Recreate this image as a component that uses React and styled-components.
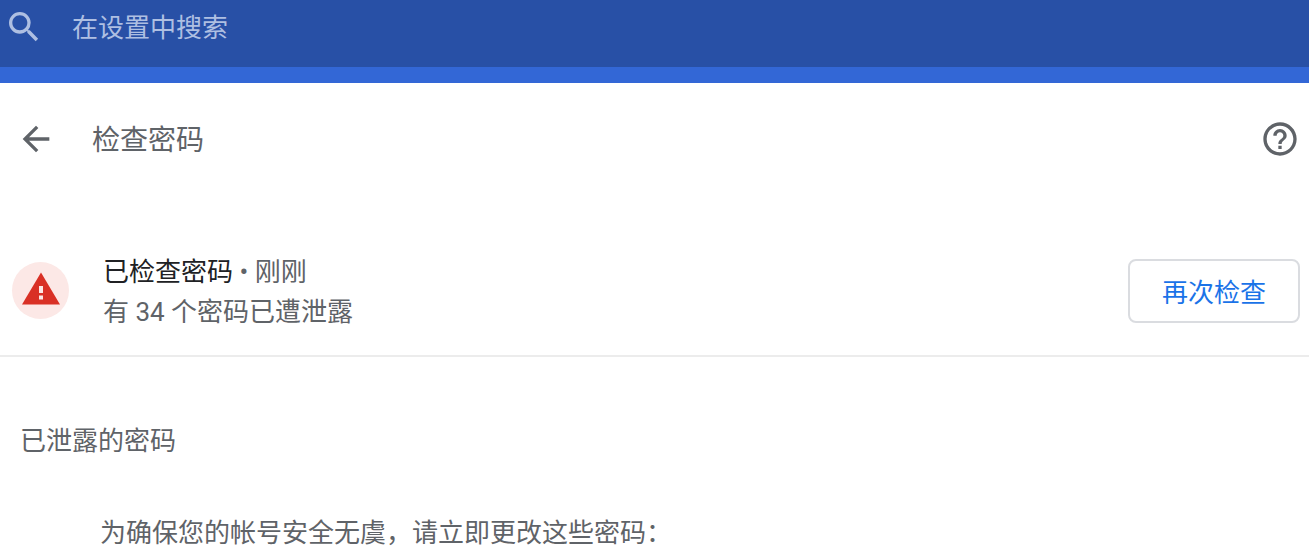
import React from 'react';
import styled, { createGlobalStyle } from 'styled-components';

const GlobalStyle = createGlobalStyle`
  html, body {
    margin: 0;
    padding: 0;
    background: #fff;
    overflow: hidden;
  }
  body {
    font-family: "Roboto", "Noto Sans CJK SC", sans-serif;
  }
`;

const Page = styled.div`
  width: 1309px;
  height: 557px;
  overflow: hidden;
  display: flex;
  flex-direction: column;
`;

const SearchBar = styled.header`
  height: 67px;
  padding: 0 0 13px 4px;
  box-sizing: border-box;
  background: #2850a6;
  display: flex;
  align-items: center;
`;

const SearchHint = styled.span`
  margin: 0 0 4px 28px;
  font-size: 26px;
  color: #aebfe2;
`;

const AccentStrip = styled.div`
  height: 16px;
  background: #3367d6;
`;

const TitleRow = styled.div`
  height: 112px;
  padding: 0 9px 0 16px;
  display: flex;
  align-items: center;
`;

const Title = styled.h1`
  margin: 0 0 3px 36px;
  flex: 1;
  font-size: 28px;
  font-weight: 400;
  color: #5f6368;
`;

const StatusRow = styled.section`
  height: 162px;
  padding: 31px 9px 0 12px;
  box-sizing: border-box;
  border-bottom: 2px solid #ececec;
  display: flex;
  align-items: center;
`;

const AlertBadge = styled.div`
  width: 57px;
  height: 57px;
  border-radius: 50%;
  background: #fce8e6;
  display: flex;
  align-items: center;
  justify-content: center;
`;

const StatusText = styled.div`
  margin: 2px 0 0 34px;
  flex: 1;
  display: flex;
  flex-direction: column;
  gap: 4px;
  font-size: 26px;
  line-height: 36px;
`;

const StatusLine = styled.div`
  color: ${({ $strong }) => ($strong ? '#202124' : '#5f6368')};
`;

const Muted = styled.span`
  color: #5f6368;
`;

const RecheckButton = styled.button`
  width: 172px;
  height: 64px;
  box-sizing: border-box;
  border: 2px solid #dadce0;
  border-radius: 8px;
  background: #fff;
  color: #1a73e8;
  font-family: inherit;
  font-size: 26px;
  padding: 0;
`;

const SectionHeading = styled.h2`
  margin: 0;
  padding: 66px 0 0 20px;
  font-size: 26px;
  line-height: 36px;
  font-weight: 400;
  color: #5f6368;
`;

const Description = styled.p`
  margin: 0;
  padding: 56px 0 0 100px;
  font-size: 26px;
  line-height: 36px;
  color: #5f6368;
`;

const SearchIcon = () => (
  <svg width="40" height="40" viewBox="0 0 24 24" fill="#aebfe2">
    <path d="M15.5 14h-.79l-.28-.27A6.47 6.47 0 0 0 16 9.5 6.5 6.5 0 1 0 9.5 16c1.61 0 3.09-.59 4.23-1.57l.27.28v.79l5 4.99L20.49 19l-4.99-5zm-6 0C7.01 14 5 11.99 5 9.5S7.01 5 9.5 5 14 7.01 14 9.5 11.99 14 9.5 14z" />
  </svg>
);

const BackIcon = () => (
  <svg width="40" height="40" viewBox="0 0 24 24" fill="#5f6368">
    <path d="M20 11H7.83l5.59-5.59L12 4l-8 8 8 8 1.41-1.41L7.83 13H20v-2z" />
  </svg>
);

const HelpIcon = () => (
  <svg width="40" height="40" viewBox="0 0 24 24" fill="#5f6368">
    <path d="M11 18h2v-2h-2v2zm1-16C6.48 2 2 6.48 2 12s4.48 10 10 10 10-4.48 10-10S17.52 2 12 2zm0 18c-4.41 0-8-3.59-8-8s3.59-8 8-8 8 3.59 8 8-3.59 8-8 8zm0-14c-2.21 0-4 1.79-4 4h2c0-1.1.9-2 2-2s2 .9 2 2c0 2-3 1.75-3 5h2c0-2.25 3-2.5 3-5 0-2.21-1.79-4-4-4z" />
  </svg>
);

const WarningIcon = () => (
  <svg width="38" height="38" viewBox="0 0 38 38">
    <path d="M19 0.5 L38 32.5 H0 Z" fill="#d93025" />
    <rect x="17" y="14" width="4" height="7" fill="#fce8e6" />
    <rect x="17" y="23.5" width="4" height="4" fill="#fce8e6" />
  </svg>
);

export default function App() {
  return (
    <Page>
      <GlobalStyle />
      <SearchBar>
        <SearchIcon />
        <SearchHint>在设置中搜索</SearchHint>
      </SearchBar>
      <AccentStrip />
      <TitleRow>
        <BackIcon />
        <Title>检查密码</Title>
        <HelpIcon />
      </TitleRow>
      <StatusRow>
        <AlertBadge>
          <WarningIcon />
        </AlertBadge>
        <StatusText>
          <StatusLine $strong>已检查密码<Muted> • 刚刚</Muted></StatusLine>
          <StatusLine>有 34 个密码已遭泄露</StatusLine>
        </StatusText>
        <RecheckButton>再次检查</RecheckButton>
      </StatusRow>
      <SectionHeading>已泄露的密码</SectionHeading>
      <Description>为确保您的帐号安全无虞，请立即更改这些密码：</Description>
    </Page>
  );
}
